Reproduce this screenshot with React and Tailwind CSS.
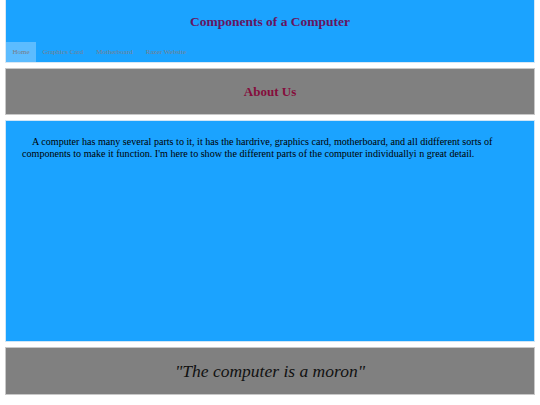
export default function App() {
  const serif = { fontFamily: '"Liberation Serif", "Times New Roman", serif' };
  return (
    <div className="w-[540px] h-[405px] bg-white px-[5px]" style={serif}>
      <header className="bg-[#1ba3ff] h-[63px] flex flex-col border-x border-b border-[#d8e8f5]">
        <h1 className="h-[43px] flex items-center justify-center text-[13.5px] font-bold text-[#651561] pt-[2px]">
          Components of a Computer
        </h1>
        <nav className="flex h-[20px] text-[7px] text-[#7a7f8a]">
          <a className="px-[6.5px] pt-[1px] flex items-center bg-[#5cbcff]">Home</a>
          <a className="px-[6.5px] pt-[1px] flex items-center">Graphics Card</a>
          <a className="px-[6.5px] pt-[1px] flex items-center">Motherboard</a>
          <a className="px-[6.5px] pt-[1px] flex items-center">Razer Website</a>
        </nav>
      </header>
      <section className="mt-[5px] h-[47px] bg-[#808080] border border-[#c8c8c8] flex items-center justify-center">
        <h2 className="text-[13px] font-bold text-[#850d3c] pt-[1px]">About Us</h2>
      </section>
      <section className="mt-[5px] h-[222px] bg-[#1ba3ff] border border-[#cfe6f7] pl-[16px] pr-[10px] pt-[15px]">
        <p className="text-[10.1px] leading-[12px] text-black indent-[10px]">
          A computer has many several parts to it, it has the hardrive, graphics card, motherboard, and all didfferent sorts of components to make it function. I'm here to show the different parts of the computer individuallyi n great detail.
        </p>
      </section>
      <section className="mt-[5px] h-[48px] bg-[#808080] border border-[#c8c8c8] flex items-center justify-center">
        <p className="text-[17.5px] italic text-[#111]">"The computer is a moron"</p>
      </section>
    </div>
  );
}
